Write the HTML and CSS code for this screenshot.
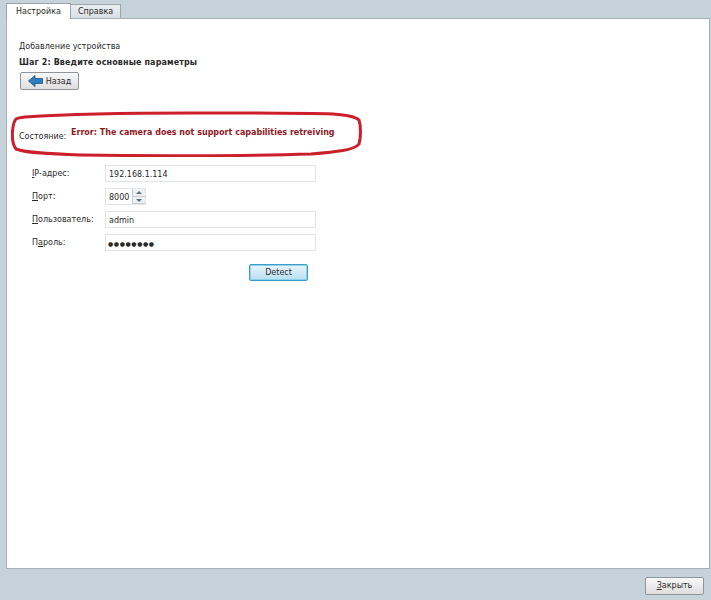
FILE: index.html
```html
<!DOCTYPE html>
<html lang="ru">
<head>
<meta charset="utf-8">
<title>Настройка</title>
<link rel="stylesheet" href="styles.css">
</head>
<body>
<div class="window">
  <div class="tabs">
    <div class="tab active">Настройка</div>
    <div class="tab">Справка</div>
  </div>
  <div class="panel">
    <div class="title">Добавление устройства</div>
    <div class="step">Шаг 2: Введите основные параметры</div>
    <button class="btn back">
      <svg class="back-icon" width="15" height="12" viewBox="0 0 15 12"><path d="M0.5 6 L7 0.5 V3.5 H14.5 V8.5 H7 V11.5 Z" fill="#2f7fc0" stroke="#1d4f80" stroke-width="0.8"/></svg>
      Назад
    </button>
    <div class="status">
      <svg class="ring" width="352" height="46" viewBox="0 0 352 46"><path d="M14 6 C60 3 120 2 180 2 C240 2 290 2 322 3 C334 4 344 5 348 9 C350 15 350 26 348 33 C344 39 325 41 300 43 C240 45 130 45 70 44 C40 43 15 42 5 38 C2 34 1 27 1.500 20 C2 15 3 10 5 8 C7 7 10 6.500 14 6 Z" fill="none" stroke="#cb1f2b" stroke-width="3"/></svg>
      <span class="status-label">Состояние:</span>
      <span class="status-error">Error: The camera does not support capabilities retreiving</span>
    </div>
    <div class="form">
      <label class="label"><u>I</u>P-адрес:</label>
      <div class="input wide">192.168.1.114</div>
      <label class="label"><u>П</u>орт:</label>
      <div class="input spin">
        <span>8000</span>
        <span class="arrows"><i class="up"></i><i class="down"></i></span>
      </div>
      <label class="label"><u>П</u>ользователь:</label>
      <div class="input wide">admin</div>
      <label class="label">П<u>а</u>роль:</label>
      <div class="input wide pass">●●●●●●●●</div>
    </div>
    <div class="detect-row"><button class="btn detect">Detect</button></div>
  </div>
  <div class="footer"><button class="btn close"><span><u>З</u>акрыть</span></button></div>
</div>
</body>
</html>
```
FILE: styles.css
```css
* { box-sizing: border-box; }
html, body { margin: 0; height: 100%; }
body { background: #c6d3da; font-family: "DejaVu Sans", sans-serif; font-size: 8px; color: #2a2a2a; overflow: hidden; }
.window { display: flex; flex-direction: column; height: 600px; width: 711px; padding: 0 1px 0 6px; }
.tabs { display: flex; height: 19px; align-items: flex-end; position: relative; z-index: 1; }
.tab { height: 14px; width: 51px; margin-bottom: 1px; background: linear-gradient(#e9eef1, #d9e0e5); border: 1px solid #9ba5ab; border-bottom: 0; text-align: center; line-height: 13px; margin-left: -1px; }
.tab.active { height: 16px; width: 65px; margin-bottom: 0; background: #fff; margin-left: 0; line-height: 15px; }
.panel { flex: 1; background: #fff; border: 1px solid #a6b0b6; margin-top: -1px; padding: 21px 12px 0; display: flex; flex-direction: column; }
.title { height: 14px; line-height: 14px; }
.step { height: 14px; line-height: 15px; font-weight: 700; margin-top: 1px; letter-spacing: 0.12px; }
.btn { font-family: inherit; font-size: 8px; color: #2a2a2a; cursor: default; padding: 0; }
.back { width: 59px; height: 18px; margin: 3px 0 0 1px; border: 1px solid #8f9498; border-radius: 2px; background: linear-gradient(#f8f8f8, #dedede); display: flex; align-items: center; justify-content: center; gap: 3px; }
.status { position: relative; height: 46px; margin: 21px 0 0 -7px; width: 352px; }
.ring { position: absolute; left: -1px; top: 0; }
.status-label { position: absolute; left: 7px; top: 21px; }
.status-error { position: absolute; left: 59px; top: 17px; color: #8e1a1f; font-weight: 700; white-space: nowrap; }
.form { display: grid; grid-template-columns: 73px 211px; row-gap: 6px; margin: 8px 0 0 13px; align-items: center; }
.label { height: 17px; line-height: 17px; }
.input { height: 17px; border: 1px solid #e2e5e7; background: #fff; line-height: 17px; padding-left: 3px; }
.spin { width: 41px; display: flex; justify-content: space-between; }
.arrows { width: 13px; display: flex; flex-direction: column; border-left: 1px solid #c9cdd0; background: #eef1f3; }
.arrows i { flex: 1; position: relative; border-bottom: 1px solid #c9cdd0; }
.up::after, .down::after { content: ""; position: absolute; left: 3px; top: 2px; border: 3px solid transparent; border-top: 0; border-bottom: 3px solid #5c6f80; }
.down::after { border-bottom: 0; border-top: 3px solid #5c6f80; }
.pass { font-size: 6px; letter-spacing: 0.6px; padding-left: 2px; }
.detect-row { margin: 13px 0 0 230px; }
.detect { width: 59px; height: 17px; border: 1px solid #3d9cc9; border-radius: 2px; background: linear-gradient(#e8f5fb, #b7e0f3); box-shadow: inset 0 0 0 1px #8fd0ea; }
.footer { height: 31px; display: flex; justify-content: flex-end; align-items: center; padding-right: 6px; }
.close { width: 59px; height: 18px; border: 1px solid #8f9498; border-radius: 2px; background: linear-gradient(#f8f8f8, #dedede); margin-top: 2px; }
```
